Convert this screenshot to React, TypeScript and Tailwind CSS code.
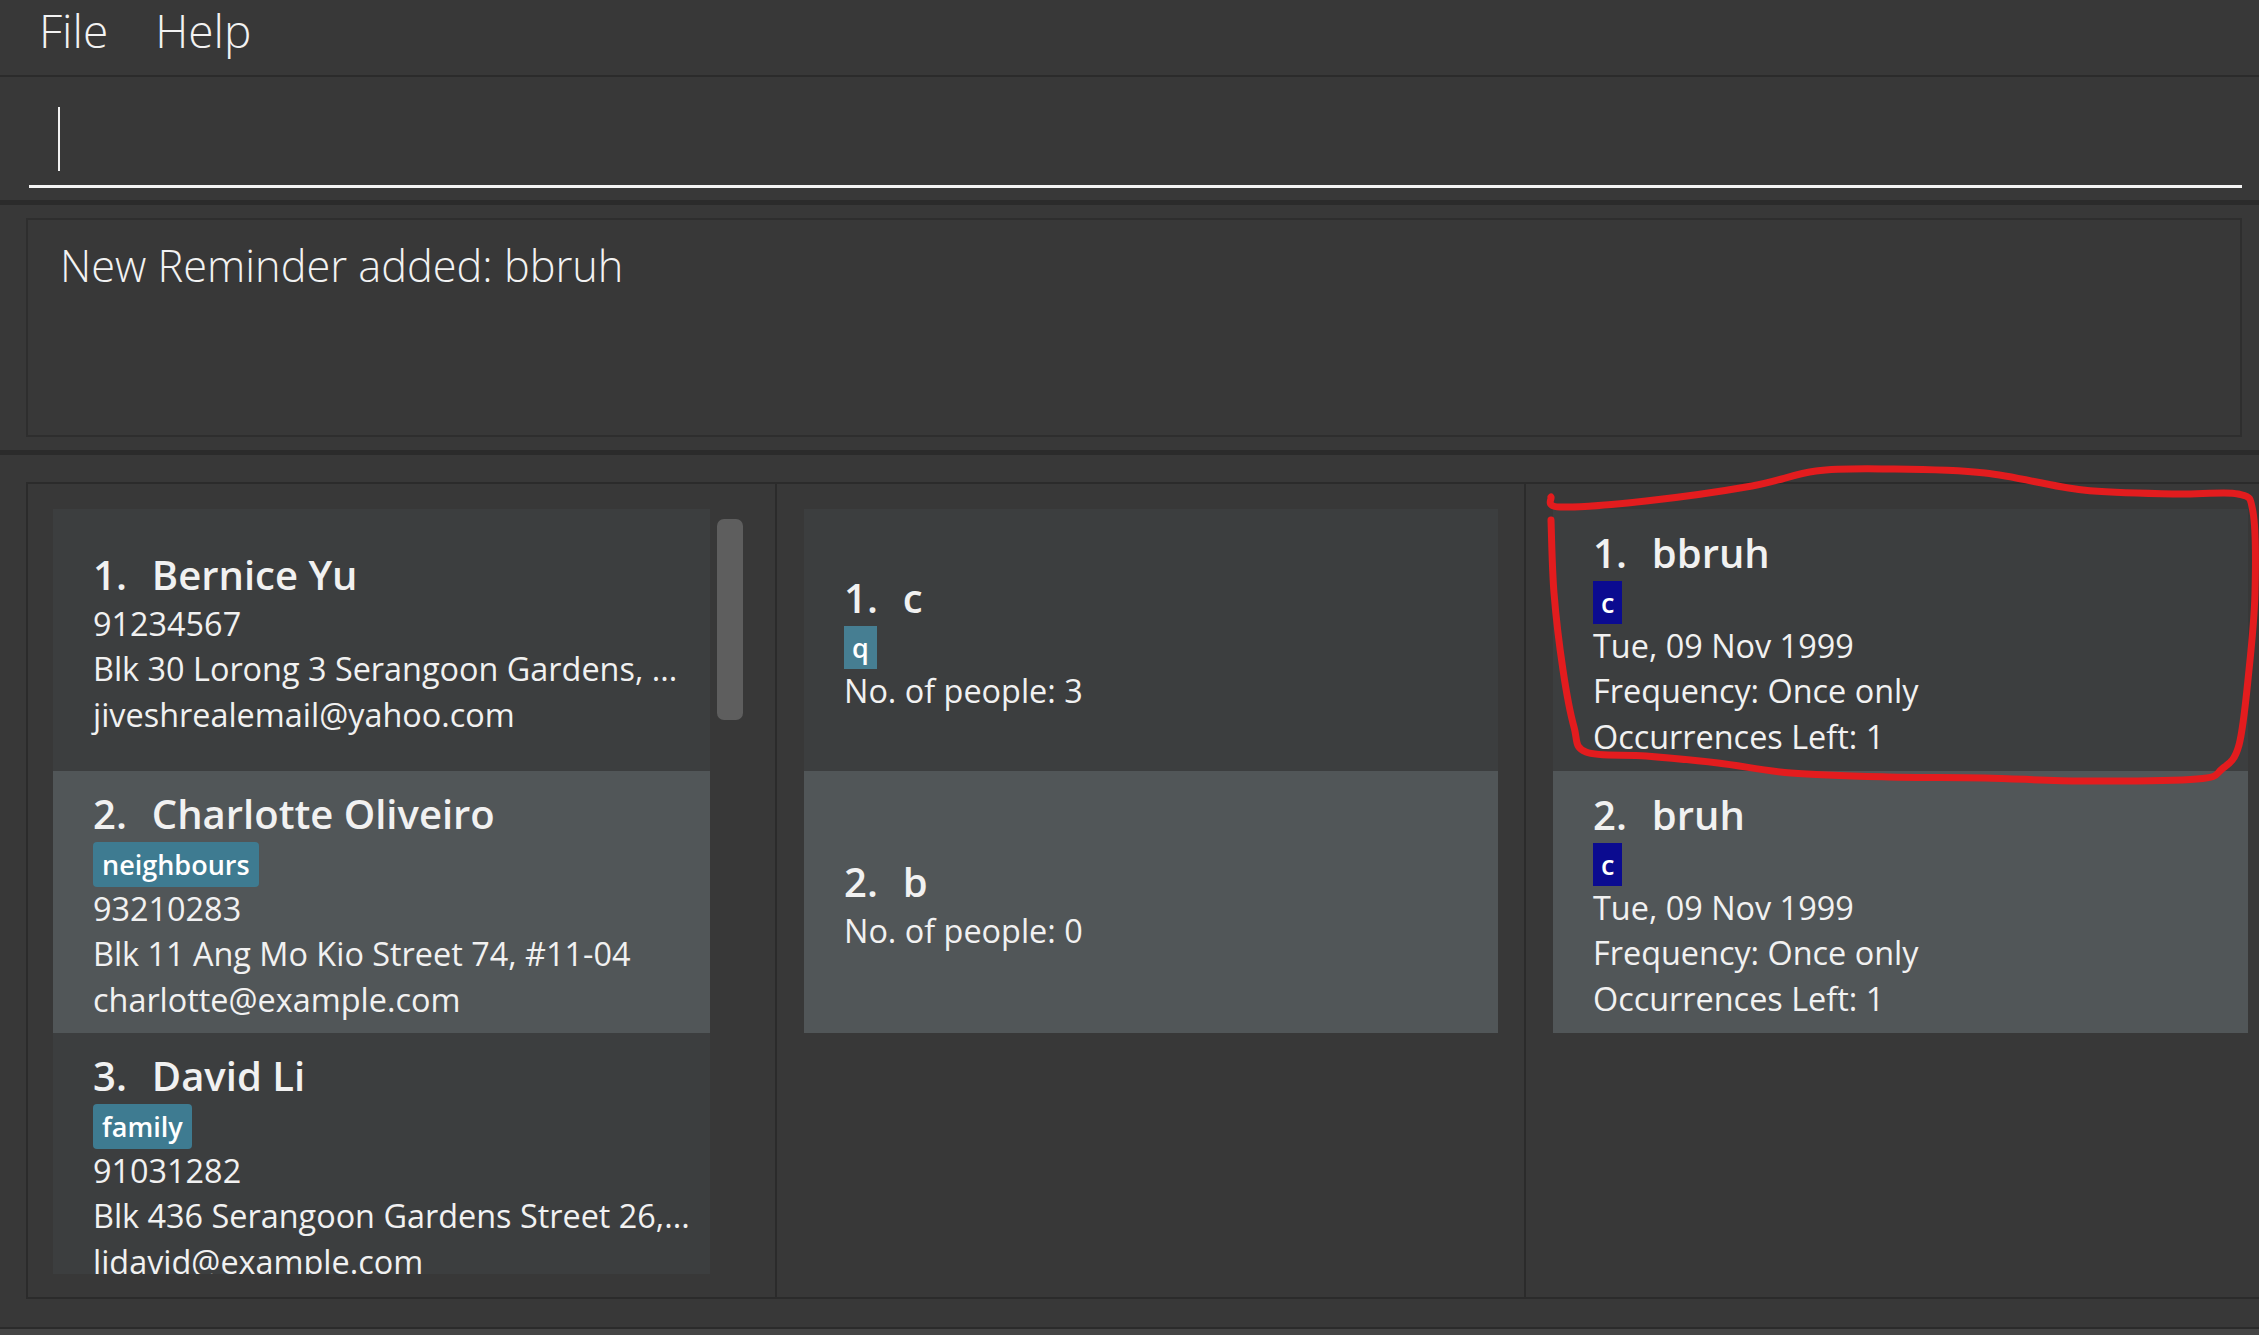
import React from 'react'

interface Person {
  name: string
  tags: string[]
  phone: string
  address: string
  email: string
}

interface EventItem {
  name: string
  tags: string[]
  people: number
}

interface Reminder {
  name: string
  tags: string[]
  date: string
  frequency: string
  left: number
}

const persons: Person[] = [
  { name: 'Bernice Yu', tags: [], phone: '91234567', address: 'Blk 30 Lorong 3 Serangoon Gardens, ...', email: 'jiveshrealemail@yahoo.com' },
  { name: 'Charlotte Oliveiro', tags: ['neighbours'], phone: '93210283', address: 'Blk 11 Ang Mo Kio Street 74, #11-04', email: 'charlotte@example.com' },
  { name: 'David Li', tags: ['family'], phone: '91031282', address: 'Blk 436 Serangoon Gardens Street 26,...', email: 'lidavid@example.com' },
]

const events: EventItem[] = [
  { name: 'c', tags: ['q'], people: 3 },
  { name: 'b', tags: [], people: 0 },
]

const reminders: Reminder[] = [
  { name: 'bbruh', tags: ['c'], date: 'Tue, 09 Nov 1999', frequency: 'Once only', left: 1 },
  { name: 'bruh', tags: ['c'], date: 'Tue, 09 Nov 1999', frequency: 'Once only', left: 1 },
]

// hand drawn highlight around the first reminder
const loop: [number, number][] = [
  [1551, 497], [1560, 507], [1646, 501], [1752, 486], [1816, 471], [1888, 469],
  [1985, 473], [2083, 490], [2180, 494], [2238, 494], [2253, 512], [2255, 593],
  [2249, 670], [2239, 745], [2222, 769], [2197, 779], [2083, 781], [1985, 778],
  [1888, 777], [1791, 773], [1718, 763], [1646, 756], [1586, 752], [1574, 727],
  [1563, 670], [1554, 593], [1551, 520],
]

function smoothPath(pts: [number, number][]) {
  let d = `M ${pts[0][0]} ${pts[0][1]}`
  for (let i = 0; i < pts.length - 1; i++) {
    const p0 = pts[i - 1] || pts[i]
    const p1 = pts[i]
    const p2 = pts[i + 1]
    const p3 = pts[i + 2] || p2
    const c1x = p1[0] + (p2[0] - p0[0]) / 6
    const c1y = p1[1] + (p2[1] - p0[1]) / 6
    const c2x = p2[0] - (p3[0] - p1[0]) / 6
    const c2y = p2[1] - (p3[1] - p1[1]) / 6
    d += ` C ${c1x} ${c1y} ${c2x} ${c2y} ${p2[0]} ${p2[1]}`
  }
  return d
}

function Card({
  index,
  name,
  tags,
  tagKind,
  lines,
}: {
  index: number
  name: string
  tags: string[]
  tagKind: 'person' | 'event' | 'reminder'
  lines: string[]
}) {
  const bg = index % 2 === 0 ? 'bg-[#3c3e3f]' : 'bg-[#515658]'
  return (
    <div className={`${bg} h-[262px] shrink-0 flex flex-col justify-center pl-[40px] pt-[9px] text-[#f1f1f1]`}>
      <div className="flex text-[40px] font-semibold leading-[46px] mb-[3px] whitespace-nowrap">
        <span className="mr-[25px]">{index + 1}.</span>
        <span>{name}</span>
      </div>
      {tags.length > 0 && (
        <div className="flex gap-[8px] mt-[2px] mb-[-1px]">
          {tags.map((tag) => (
            <span
              key={tag}
              className={
                tagKind === 'person'
                  ? 'h-[45px] px-[9px] rounded-[4px] bg-[#3e7b91] text-[27px] font-semibold leading-[45px] text-white'
                  : tagKind === 'event'
                  ? 'h-[43px] px-[8px] bg-[#467e92] text-[27px] font-semibold leading-[43px] text-white'
                  : 'h-[43px] px-[8px] bg-[#0b0b90] text-[27px] font-semibold leading-[43px] text-white'
              }
            >
              {tag}
            </span>
          ))}
        </div>
      )}
      {lines.map((line, i) => (
        <div key={i} className="text-[32.4px] leading-[45.5px] whitespace-nowrap">
          {line}
        </div>
      ))}
    </div>
  )
}

export default function App() {
  return (
    <div className="relative w-[2259px] h-[1335px] overflow-hidden bg-[#383838] font-['Open_Sans',sans-serif] text-white">
      {/* Menu bar */}
      <div className="h-[77px] border-b-2 border-[#2b2b2b] flex items-start pl-[39px] text-[46px] font-light leading-[60px] text-[#f2f2f2]">
        <span>File</span>
        <span className="ml-[47px]">Help</span>
      </div>

      {/* Command box */}
      <div className="h-[128px] border-b-[5px] border-[#2b2b2b] pl-[29px] pr-[17px] pt-[30px]">
        <div className="h-[81px] border-b-[3px] border-[#f4f4f4]">
          <div className="ml-[29px] w-[2px] h-[64px] bg-[#f2f2f2]" />
        </div>
      </div>

      {/* Result display */}
      <div className="h-[250px] border-b-[5px] border-[#2b2b2b] pt-[13px] pl-[26px] pr-[17px]">
        <div className="h-[219px] border-2 border-[#2e2e2e] pl-[32px] pt-[14px] text-[43.3px] font-light leading-normal text-[#f2f2f2]">
          New Reminder added: bbruh
        </div>
      </div>

      {/* Lists */}
      <div className="h-[874px] border-b-2 border-[#2b2b2b] pt-[27px] pl-[26px]">
        <div className="flex h-[817px] border-y-2 border-l-2 border-[#2b2b2b]">
          <div className="w-[749px] shrink-0 border-r-2 border-[#2b2b2b] pt-[25px] pl-[25px] flex gap-[7px]">
            <div className="w-[657px] h-[765px] overflow-hidden flex flex-col">
              {persons.map((p, i) => (
                <Card
                  key={p.name}
                  index={i}
                  name={p.name}
                  tags={p.tags}
                  tagKind="person"
                  lines={[p.phone, p.address, p.email]}
                />
              ))}
            </div>
            <div className="mt-[10px] w-[26px] h-[201px] rounded-[7px] bg-[#5e5e5e]" />
          </div>

          <div className="w-[749px] shrink-0 border-r-2 border-[#2b2b2b] pt-[25px] pl-[27px]">
            <div className="w-[694px] flex flex-col">
              {events.map((e, i) => (
                <Card
                  key={e.name}
                  index={i}
                  name={e.name}
                  tags={e.tags}
                  tagKind="event"
                  lines={[`No. of people: ${e.people}`]}
                />
              ))}
            </div>
          </div>

          <div className="flex-1 pt-[25px] pl-[27px]">
            <div className="w-[695px] flex flex-col">
              {reminders.map((r, i) => (
                <Card
                  key={r.name}
                  index={i}
                  name={r.name}
                  tags={r.tags}
                  tagKind="reminder"
                  lines={[r.date, `Frequency: ${r.frequency}`, `Occurrences Left: ${r.left}`]}
                />
              ))}
            </div>
          </div>
        </div>
      </div>

      {/* Status bar */}
      <div className="h-[6px] bg-[#454545]" />

      {/* Red annotation */}
      <svg
        className="absolute inset-0 pointer-events-none"
        width="2259"
        height="1335"
        viewBox="0 0 2259 1335"
      >
        <path
          d={smoothPath(loop)}
          fill="none"
          stroke="#e31c1e"
          strokeWidth="7"
          strokeLinecap="round"
          strokeLinejoin="round"
        />
      </svg>
    </div>
  )
}
